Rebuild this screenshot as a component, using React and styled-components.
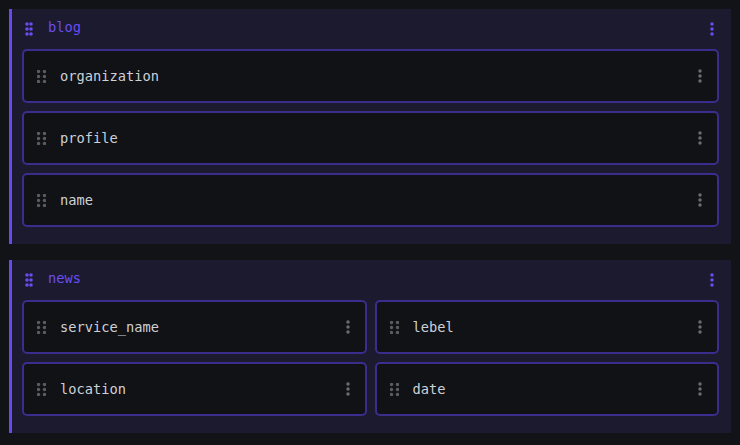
import React from "react";
import styled, { createGlobalStyle } from "styled-components";

const Global = createGlobalStyle`
  html, body { margin: 0; padding: 0; background: #111317; }
  body { font-family: "DejaVu Sans Mono", "Liberation Mono", monospace; }
`;

const Page = styled.div`
  display: flex;
  flex-direction: column;
  gap: 16px;
  padding: 9px 9px;
  min-height: 445px;
  box-sizing: border-box;
  background: #111317;
`;

const Group = styled.section`
  background: #1b1a2f;
  border-left: 3px solid #6a47f2;
  padding: 0 12px 17px 10px;
`;

const Header = styled.div`
  height: 40px;
  display: flex;
  align-items: center;
  padding: 0 5px 0 3px;
`;

const HeaderTitle = styled.span`
  flex: 1;
  margin-left: 15px;
  color: #6b4df0;
  font-size: 13.7px;
  line-height: 1;
  margin-top: -2px;
`;

const Items = styled.div`
  display: grid;
  grid-template-columns: ${(p) => (p.$cols === 2 ? "1fr 1fr" : "1fr")};
  gap: 8px;
`;

const Item = styled.div`
  height: 54px;
  box-sizing: border-box;
  border: 2px solid #3a2d8e;
  border-radius: 5px;
  background: #101216;
  display: flex;
  align-items: center;
  padding: 0 15px 0 13px;
`;

const ItemLabel = styled.span`
  flex: 1;
  margin-left: 14px;
  margin-top: 1px;
  color: #cdd0d6;
  font-size: 13.7px;
  line-height: 1;
`;

const Icon = styled.svg`
  display: block;
  flex: none;
`;

const HeaderGrip = () => (
  <Icon width="8" height="14" viewBox="0 0 8 14">
    {[2, 7, 12].map((y) =>
      [2, 6].map((x) => (
        <circle key={`${x}-${y}`} cx={x} cy={y} r="1.8" fill="#6a4cf0" />
      ))
    )}
  </Icon>
);

const ItemGrip = () => (
  <Icon width="9" height="13" viewBox="0 0 9 13">
    {[0, 5, 10].map((y) =>
      [0, 6].map((x) => (
        <circle key={`${x}-${y}`} cx={x + 1.5} cy={y + 1.5} r="1.7" fill="#5a5c62" />
      ))
    )}
  </Icon>
);

const Kebab = ({ color }) => (
  <Icon width="4" height="14" viewBox="0 0 4 14">
    {[2, 7, 12].map((y) => (
      <circle key={y} cx="2" cy={y} r="1.75" fill={color} />
    ))}
  </Icon>
);

const groups = [
  { name: "blog", cols: 1, items: ["organization", "profile", "name"] },
  { name: "news", cols: 2, items: ["service_name", "lebel", "location", "date"] },
];

export default function App() {
  return (
    <>
      <Global />
      <Page>
        {groups.map((g) => (
          <Group key={g.name}>
            <Header>
              <HeaderGrip />
              <HeaderTitle>{g.name}</HeaderTitle>
              <Kebab color="#6a4cf0" />
            </Header>
            <Items $cols={g.cols}>
              {g.items.map((it) => (
                <Item key={it}>
                  <ItemGrip />
                  <ItemLabel>{it}</ItemLabel>
                  <Kebab color="#6b6d72" />
                </Item>
              ))}
            </Items>
          </Group>
        ))}
      </Page>
    </>
  );
}
